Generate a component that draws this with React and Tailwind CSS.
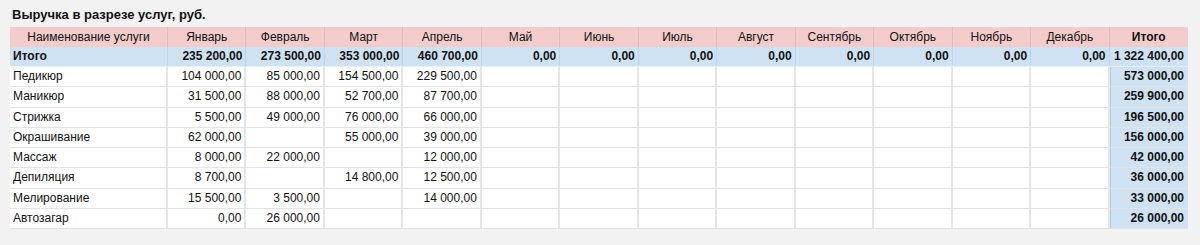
import React from "react";

const months = ["Январь","Февраль","Март","Апрель","Май","Июнь","Июль","Август","Сентябрь","Октябрь","Ноябрь","Декабрь"];
const totals = ["235 200,00","273 500,00","353 000,00","460 700,00","0,00","0,00","0,00","0,00","0,00","0,00","0,00","0,00"];
const rows = [
  ["Педикюр", ["104 000,00","85 000,00","154 500,00","229 500,00"], "573 000,00"],
  ["Маникюр", ["31 500,00","88 000,00","52 700,00","87 700,00"], "259 900,00"],
  ["Стрижка", ["5 500,00","49 000,00","76 000,00","66 000,00"], "196 500,00"],
  ["Окрашивание", ["62 000,00","","55 000,00","39 000,00"], "156 000,00"],
  ["Массаж", ["8 000,00","22 000,00","","12 000,00"], "42 000,00"],
  ["Депиляция", ["8 700,00","","14 800,00","12 500,00"], "36 000,00"],
  ["Мелирование", ["15 500,00","3 500,00","","14 000,00"], "33 000,00"],
  ["Автозагар", ["0,00","26 000,00","",""], "26 000,00"],
];

const gridCls = "grid grid-cols-[158px_repeat(13,minmax(0,1fr))] w-[1178px]";

export default function App() {
  return (
    <div className="w-[1200px] h-[245px] bg-[#f2f2f2] text-[#111] overflow-hidden" style={{ fontFamily: '"Liberation Sans", Arial, sans-serif' }}>
      <div className="pl-[12px] pt-[7px] h-[27px] text-[13px] font-bold leading-[15px]">Выручка в разрезе услуг, руб.</div>
      <div className="ml-[10px]">
        <div className={`${gridCls} h-[20px] bg-[#f4cccc] text-[12px] leading-[20px]`}>
          <div className="text-center border-r border-[#e8b9b9]">Наименование услуги</div>
          {months.map((m) => (
            <div key={m} className="text-center border-r border-[#e8b9b9]">{m}</div>
          ))}
          <div className="text-center font-bold">Итого</div>
        </div>
        <div className={`${gridCls} h-[20px] bg-[#cfe2f3] text-[12px] leading-[19px] font-bold border-b border-[#e6eef6]`}>
          <div className="pl-[3px] border-r border-[#bcd3e8]">Итого</div>
          {totals.map((t, i) => (
            <div key={i} className="text-right pr-[3px] border-r border-[#bcd3e8]">{t}</div>
          ))}
          <div className="text-right pr-[4px]">1 322 400,00</div>
        </div>
        {rows.map(([name, vals, total]) => (
          <div key={name} className={`${gridCls} h-[20.25px] bg-white text-[12px] leading-[19px] border-b border-[#e3e3e3]`}>
            <div className="pl-[3px] border-r-2 border-[#e6e6e6]">{name}</div>
            {Array.from({ length: 12 }).map((_, i) => (
              <div key={i} className="text-right pr-[3px] border-r-2 border-[#e6e6e6]">{vals[i] || ""}</div>
            ))}
            <div className="text-right pr-[4px] font-bold bg-[#cfe2f3] border-l border-[#b6cde3]">{total}</div>
          </div>
        ))}
      </div>
    </div>
  );
}
